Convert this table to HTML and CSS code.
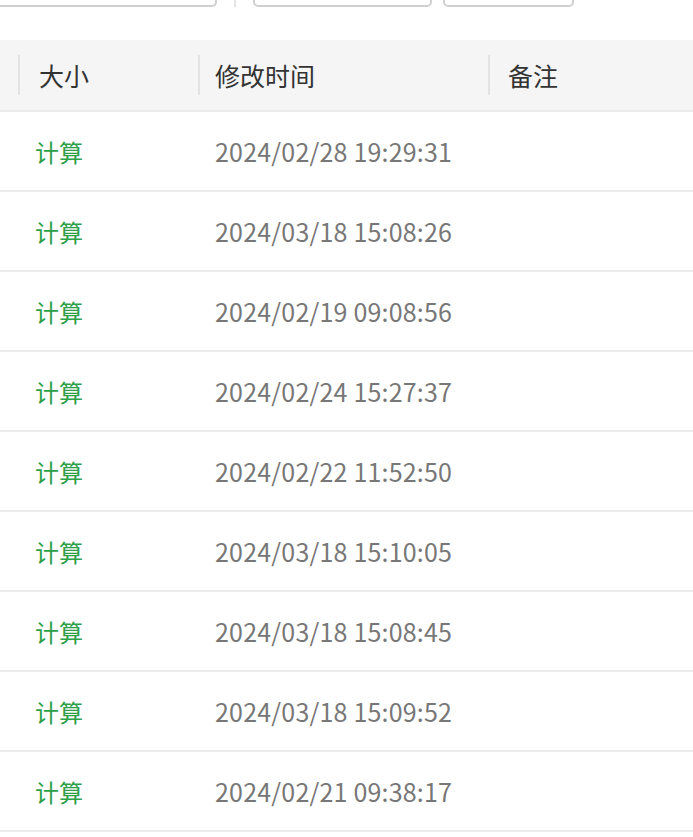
FILE: index.html
```html
<!DOCTYPE html>
<html lang="zh-CN">
<head>
<meta charset="utf-8">
<link rel="stylesheet" href="styles.css">
</head>
<body>
<div class="toolbar">
  <div class="field field-wide"></div>
  <div class="divider"></div>
  <div class="field field-mid"></div>
  <div class="field field-small"></div>
</div>
<div class="grid">
  <div class="row head">
    <div class="cell c0"></div>
    <div class="cell c1 sep"><span class="h">大小</span></div>
    <div class="cell c2 sep"><span class="h">修改时间</span></div>
    <div class="cell c3 sep"><span class="h">备注</span></div>
  </div>
  <div class="row"><div class="cell c0"></div><div class="cell c1"><a class="calc">计算</a></div><div class="cell c2 date">2024/02/28 19:29:31</div><div class="cell c3"></div></div>
  <div class="row"><div class="cell c0"></div><div class="cell c1"><a class="calc">计算</a></div><div class="cell c2 date">2024/03/18 15:08:26</div><div class="cell c3"></div></div>
  <div class="row"><div class="cell c0"></div><div class="cell c1"><a class="calc">计算</a></div><div class="cell c2 date">2024/02/19 09:08:56</div><div class="cell c3"></div></div>
  <div class="row"><div class="cell c0"></div><div class="cell c1"><a class="calc">计算</a></div><div class="cell c2 date">2024/02/24 15:27:37</div><div class="cell c3"></div></div>
  <div class="row"><div class="cell c0"></div><div class="cell c1"><a class="calc">计算</a></div><div class="cell c2 date">2024/02/22 11:52:50</div><div class="cell c3"></div></div>
  <div class="row"><div class="cell c0"></div><div class="cell c1"><a class="calc">计算</a></div><div class="cell c2 date">2024/03/18 15:10:05</div><div class="cell c3"></div></div>
  <div class="row"><div class="cell c0"></div><div class="cell c1"><a class="calc">计算</a></div><div class="cell c2 date">2024/03/18 15:08:45</div><div class="cell c3"></div></div>
  <div class="row"><div class="cell c0"></div><div class="cell c1"><a class="calc">计算</a></div><div class="cell c2 date">2024/03/18 15:09:52</div><div class="cell c3"></div></div>
  <div class="row"><div class="cell c0"></div><div class="cell c1"><a class="calc">计算</a></div><div class="cell c2 date">2024/02/21 09:38:17</div><div class="cell c3"></div></div>
</div>
</body>
</html>
```
FILE: styles.css
```css
html, body {
  margin: 0;
  padding: 0;
  background: #fff;
  overflow: hidden;
}
body {
  font-family: "Noto Sans CJK SC", "Noto Sans", sans-serif;
  width: 693px;
  height: 837px;
}
.toolbar {
  display: flex;
  align-items: flex-end;
  height: 32px;
  margin-top: -25px;
  padding-left: 0;
  overflow: hidden;
}
.field {
  box-sizing: border-box;
  height: 32px;
  border: 2px solid #d0d0d0;
  border-radius: 5px;
  background: #fff;
  flex: none;
}
.field-wide {
  width: 227px;
  margin-left: -10px;
}
.divider {
  flex: none;
  width: 2px;
  height: 32px;
  background: #e4e4e4;
  margin: 0 17px 0 17px;
}
.field-mid { width: 179px; }
.field-small { width: 131px; margin-left: 11px; }

.grid {
  margin-top: 33px;
  width: 100%;
}
.row {
  display: flex;
  height: 78px;
  border-bottom: 2px solid #ebebeb;
  align-items: center;
}
.head {
  height: 70px;
  background: #f5f5f5;
}
.cell {
  box-sizing: border-box;
  height: 100%;
  display: flex;
  align-items: center;
  position: relative;
  flex: none;
}
.c0 { width: 18px; }
.c1 { width: 180px; padding-left: 17px; }
.c2 { width: 290px; padding-left: 17px; }
.c3 { flex: 1; padding-left: 20px; }
.head .c1 { padding-left: 21px; }
.head .c2 { padding-left: 17px; }
.sep::before {
  content: "";
  position: absolute;
  left: 0;
  top: 15px;
  bottom: 15px;
  width: 2px;
  background: #e3e3e3;
}
.h {
  font-size: 25px;
  color: #333;
}
.calc {
  font-size: 24px;
  color: #2e9e48;
}
.date {
  font-size: 25px;
  letter-spacing: 0.2px;
  color: #777;
}
```
